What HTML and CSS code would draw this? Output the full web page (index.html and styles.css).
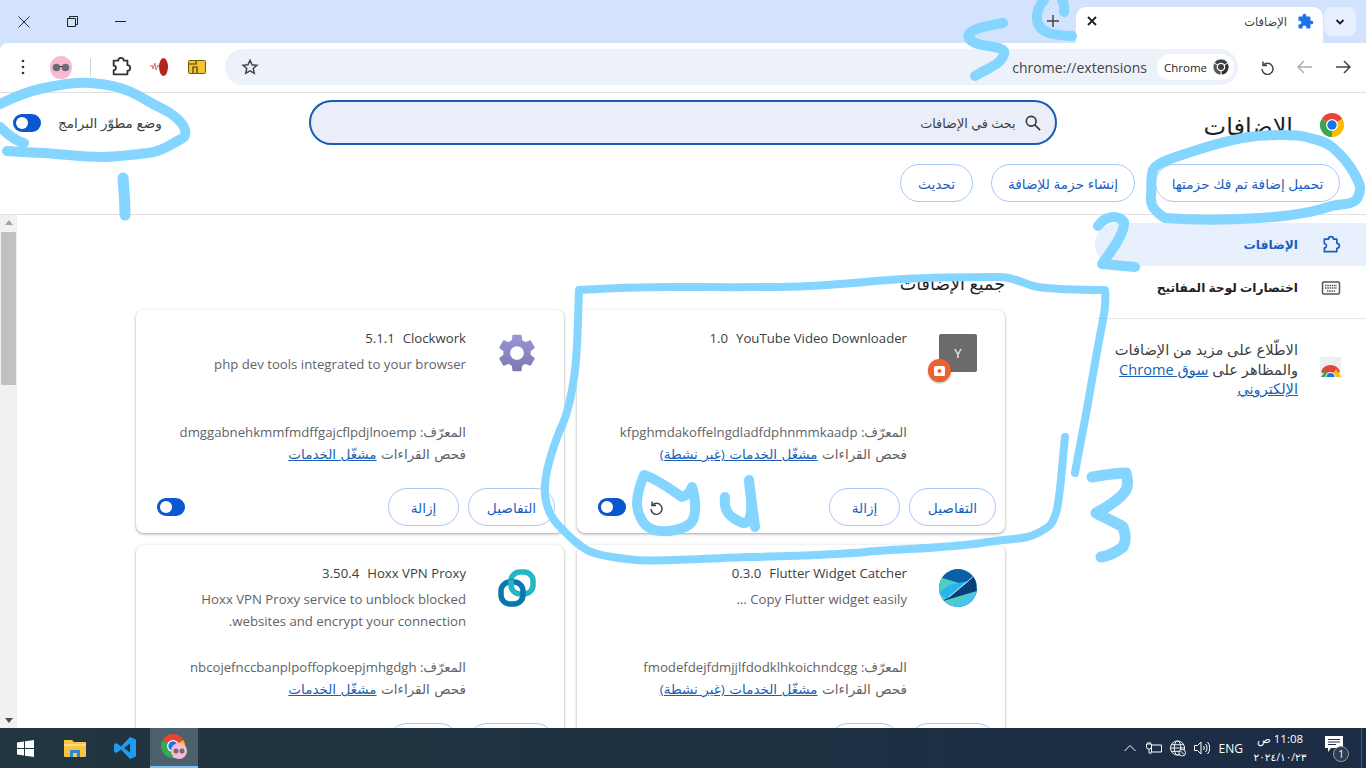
FILE: index.html
```html
<!DOCTYPE html>
<html lang="ar" dir="rtl">
<head>
    <meta charset="UTF-8">
    <meta name="viewport" content="width=device-width, initial-scale=1.0">
    <title>الإضافات</title>
    <link rel="stylesheet" href="styles.css">
</head>
<body>

    <svg class="defs" width="0" height="0">
        <symbol id="chrome-logo" viewBox="0 0 24 24">
            <path fill="#ea4335" d="M12 12L1.6 6A12 12 0 0 1 22.4 6Z"/>
            <path fill="#fbbc04" d="M12 12L22.4 6A12 12 0 0 1 12 24Z"/>
            <path fill="#34a853" d="M12 12L12 24A12 12 0 0 1 1.6 6Z"/>
            <circle cx="12" cy="12" r="6" fill="#fff"/>
            <circle cx="12" cy="12" r="4.7" fill="#1a73e8"/>
        </symbol>
        <symbol id="puzzle" viewBox="0 0 24 24">
            <path d="M4 5h5a3 3 0 0 1 6 0h4v5a3 3 0 0 1 0 6v4H4v-4.500a2 2 0 0 0 0-5z"/>
        </symbol>
    </svg>

    <!-- window title bar + tab -->
    <div class="titlebar">
        <button class="strip-btn">
            <svg width="12" height="12" viewBox="0 0 12 12"><path d="M2.500 4L6 7.500 9.500 4" fill="none" stroke="#1f1f1f" stroke-width="1.800"/></svg>
        </button>
        <div class="tab">
            <svg class="tab-icon" width="17" height="17" viewBox="0 0 24 24"><path fill="#1a73e8" d="M20.500 11H19V7c0-1.100-.9-2-2-2h-4V3.500C13 2.120 11.880 1 10.500 1S8 2.120 8 3.500V5H4c-1.100 0-2 .9-2 2v3.800h1.500c1.490 0 2.700 1.210 2.700 2.700s-1.210 2.700-2.700 2.700H2V20c0 1.100.9 2 2 2h3.800v-1.500c0-1.490 1.210-2.700 2.700-2.700 1.490 0 2.700 1.210 2.700 2.700V22H17c1.100 0 2-.9 2-2v-4h1.500c1.380 0 2.500-1.120 2.500-2.500S21.880 11 20.500 11z"/></svg>
            <span class="tab-title">الإضافات</span>
            <svg class="tab-close" width="10" height="10" viewBox="0 0 10 10"><path d="M1 1l8 8M9 1L1 9" stroke="#1f1f1f" stroke-width="1.800"/></svg>
        </div>
        <button class="new-tab">
            <svg width="12" height="12" viewBox="0 0 12 12"><path d="M6 0v12M0 6h12" stroke="#444" stroke-width="1.500"/></svg>
        </button>
        <div class="spacer"></div>
        <div class="win-btn"><svg width="11" height="11" viewBox="0 0 11 11"><path d="M0 5.500h11" stroke="#222"/></svg></div>
        <div class="win-btn"><svg width="11" height="11" viewBox="0 0 11 11"><path d="M.5 2.500h8v8h-8zM2.500 2.500v-2h8v8h-2" fill="none" stroke="#222"/></svg></div>
        <div class="win-btn"><svg width="12" height="12" viewBox="0 0 12 12"><path d="M.5.500l11 11M11.500.500l-11 11" stroke="#222"/></svg></div>
    </div>

    <!-- address bar -->
    <div class="toolbar">
        <div class="tool">
            <svg width="16" height="16" viewBox="0 0 16 16"><path d="M1 8h14M9 2l6 6-6 6" fill="none" stroke="#444" stroke-width="1.500"/></svg>
        </div>
        <div class="tool">
            <svg width="16" height="16" viewBox="0 0 16 16"><path d="M15 8H1M7 2L1 8l6 6" fill="none" stroke="#a9adb3" stroke-width="1.500"/></svg>
        </div>
        <div class="tool">
            <svg width="16" height="16" viewBox="0 0 16 16"><path d="M4 2.500v4h4M4.300 6.300A5.500 5.500 0 1 1 3 10" fill="none" stroke="#444" stroke-width="1.500"/></svg>
        </div>
        <div class="omnibox">
            <div class="chip">
                <svg width="16" height="16" viewBox="0 0 24 24"><g stroke="#fff" stroke-width="1.200"><path fill="#3c4043" d="M12 12L1.600 6A12 12 0 0 1 22.400 6Z"/><path fill="#2a2d30" d="M12 12L22.400 6A12 12 0 0 1 12 24Z"/><path fill="#50555a" d="M12 12L12 24A12 12 0 0 1 1.600 6Z"/></g><circle cx="12" cy="12" r="6.500" fill="#fff"/><circle cx="12" cy="12" r="4.500" fill="#3c4043"/></svg>
                <span>Chrome</span>
            </div>
            <span class="url">chrome://extensions</span>
            <svg class="star" width="18" height="18" viewBox="0 0 24 24"><path d="M12 3l2.700 6 6.500.7-4.900 4.300 1.400 6.400L12 17.100l-5.700 3.300 1.400-6.400L2.800 9.700 9.300 9z" fill="none" stroke="#444" stroke-width="2"/></svg>
        </div>
        <div class="tool">
            <svg width="18" height="14" viewBox="0 0 18 14"><rect x=".5" y=".5" width="17" height="13" rx="1" fill="#f4c430" stroke="#6b5a10"/><path d="M1 4h7V1M5 13V7h4v6" fill="none" stroke="#4a3d08" stroke-width="1.200"/></svg>
        </div>
        <div class="tool">
            <svg width="20" height="20" viewBox="0 0 20 20"><ellipse cx="14.500" cy="10" rx="4.500" ry="9" fill="#b3261e"/><path d="M1 10l2-2 1 4 2-6 1 7 2-5 1 2" fill="none" stroke="#d9736c" stroke-width="1"/></svg>
        </div>
        <div class="tool">
            <svg class="icon-line" width="22" height="22"><use href="#puzzle"/></svg>
        </div>
        <div class="tool-sep"></div>
        <div class="tool">
            <svg width="22" height="23" viewBox="0 0 22 23"><ellipse cx="11" cy="11.500" rx="11" ry="11.500" fill="#f7b9d3"/><circle cx="6.500" cy="11.500" r="3.800" fill="#6a6e70"/><circle cx="15.500" cy="11.500" r="3.800" fill="#6a6e70"/><path d="M10 10.500h2" stroke="#333"/></svg>
        </div>
        <div class="tool">
            <svg width="4" height="16" viewBox="0 0 4 16"><circle cx="2" cy="2" r="1.300" fill="#333"/><circle cx="2" cy="8" r="1.300" fill="#333"/><circle cx="2" cy="14" r="1.300" fill="#333"/></svg>
        </div>
    </div>

    <!-- extensions page header -->
    <div class="page-head">
        <div class="page-title">
            <svg width="24" height="24"><use href="#chrome-logo"/></svg>
            <h1>الإضافات</h1>
        </div>
        <div class="search">
            <svg width="16" height="16" viewBox="0 0 18 18"><circle cx="7" cy="7" r="5.500" fill="none" stroke="#333" stroke-width="1.800"/><path d="M11 11l6 6" stroke="#333" stroke-width="1.800"/></svg>
            <span>بحث في الإضافات</span>
        </div>
        <div class="dev-mode">
            <span>وضع مطوّر البرامج</span>
            <div class="toggle"></div>
        </div>
    </div>

    <div class="dev-actions">
        <button class="pill load">تحميل إضافة تم فك حزمتها</button>
        <button class="pill pack">إنشاء حزمة للإضافة</button>
        <button class="pill update">تحديث</button>
    </div>

    <div class="main">
        <div class="sidebar">
            <div class="side-item active">
                <svg class="icon-line blue" width="20" height="20"><use href="#puzzle"/></svg>
                <span>الإضافات</span>
            </div>
            <div class="side-item">
                <svg width="20" height="20" viewBox="0 0 20 20"><rect x="1.500" y="4" width="17" height="12" rx="1.500" fill="none" stroke="#555" stroke-width="1.500"/><path d="M4 7.500h12M4 10h12M6 13h8" stroke="#555" stroke-width="1.500" stroke-dasharray="1.500 .8"/></svg>
                <span>اختصارات لوحة المفاتيح</span>
            </div>
            <div class="side-divider"></div>
            <div class="promo">
                <svg width="21" height="20" viewBox="0 0 21 20"><rect width="21" height="20" fill="#eceff1"/><clipPath id="promo-clip"><rect width="21" height="20"/></clipPath><g clip-path="url(#promo-clip)"><path fill="#ea4335" d="M10.500 20L1 15A10 10 0 0 1 20 15Z"/><path fill="#fbbc04" d="M10.500 20L16 12l5 8Z"/><path fill="#34a853" d="M10.500 20L6 13l-5 7Z"/><circle cx="10.500" cy="20" r="5" fill="#fff"/><circle cx="10.500" cy="20" r="4" fill="#1a73e8"/></g></svg>
                <p>الاطّلاع على مزيد من الإضافات<br>والمظاهر على <a href="#">سوق Chrome<br>الإلكتروني</a></p>
            </div>
        </div>

        <div class="content">
            <h2>جميع الإضافات</h2>
            <div class="cards">

                <div class="card">
                    <div class="card-body">
                        <div class="ext-icon">
                            <div class="yt-icon">Y</div>
                            <div class="yt-badge"><svg width="12" height="10" viewBox="0 0 12 10"><rect width="11" height="10" rx="1.500" fill="#fff"/><circle cx="5.500" cy="5" r="2" fill="#f0602c"/></svg></div>
                        </div>
                        <div class="card-text">
                            <div class="ext-name"><span>YouTube Video Downloader</span><span>1.0</span></div>
                            <div class="ext-desc"></div>
                            <div class="ext-id">المعرّف: kfpghmdakoffelngdladfdphnmmkaadp</div>
                            <div class="ext-views">فحص القراءات <a href="#">مشغّل الخدمات (غير نشطة)</a></div>
                        </div>
                    </div>
                    <div class="card-foot">
                        <button class="pill details">التفاصيل</button>
                        <button class="pill remove">إزالة</button>
                        <div class="spacer"></div>
                        <svg class="card-reload" width="16" height="16" viewBox="0 0 16 16"><path d="M4 2.500v4h4M4.300 6.300A5.500 5.500 0 1 1 3 10" fill="none" stroke="#444" stroke-width="1.500"/></svg>
                        <div class="toggle"></div>
                    </div>
                </div>

                <div class="card">
                    <div class="card-body">
                        <div class="ext-icon">
                            <svg width="38" height="38" viewBox="2 2 20 20"><defs><linearGradient id="gear-fill" x1="0" y1="0" x2="0" y2="1"><stop offset="0" stop-color="#9a96d8"/><stop offset="1" stop-color="#7d79b0"/></linearGradient></defs><path fill="url(#gear-fill)" d="M19.140 12.940c.04-.3.06-.61.06-.94 0-.32-.02-.64-.07-.94l2.030-1.580c.18-.14.23-.41.12-.61l-1.920-3.320c-.12-.22-.37-.29-.59-.22l-2.390.96c-.5-.38-1.030-.7-1.620-.94l-.36-2.540c-.04-.24-.24-.41-.48-.41h-3.840c-.24 0-.43.17-.47.41l-.36 2.540c-.59.24-1.130.57-1.620.94l-2.390-.96c-.22-.08-.47 0-.59.22L2.740 8.870c-.12.21-.08.47.12.61l2.030 1.580c-.05.3-.09.63-.09.94s.02.64.07.94l-2.030 1.580c-.18.14-.23.41-.12.61l1.920 3.320c.12.22.37.29.59.22l2.390-.96c.5.38 1.030.7 1.620.94l.36 2.540c.05.24.24.41.48.41h3.840c.24 0 .44-.17.47-.41l.36-2.540c.59-.24 1.130-.56 1.620-.94l2.390.96c.22.08.47 0 .59-.22l1.920-3.320c.12-.22.07-.47-.12-.61l-2.010-1.580zM12 15.600c-1.980 0-3.600-1.620-3.600-3.600s1.620-3.600 3.600-3.600 3.600 1.620 3.600 3.600-1.620 3.600-3.600 3.600z"/></svg>
                        </div>
                        <div class="card-text">
                            <div class="ext-name"><span>Clockwork</span><span>5.1.1</span></div>
                            <div class="ext-desc">php dev tools integrated to your browser</div>
                            <div class="ext-id">المعرّف: dmggabnehkmmfmdffgajcflpdjlnoemp</div>
                            <div class="ext-views">فحص القراءات <a href="#">مشغّل الخدمات</a></div>
                        </div>
                    </div>
                    <div class="card-foot">
                        <button class="pill details">التفاصيل</button>
                        <button class="pill remove">إزالة</button>
                        <div class="spacer"></div>
                        <div class="toggle"></div>
                    </div>
                </div>

                <div class="card">
                    <div class="card-body">
                        <div class="ext-icon">
                            <svg width="38" height="38" viewBox="0 0 38 38"><defs><clipPath id="flutter-clip"><circle cx="19" cy="19" r="19"/></clipPath></defs><g clip-path="url(#flutter-clip)"><rect width="38" height="38" fill="#0b5ea8"/><path d="M0 8l20 6 18-2v14L10 38H0z" fill="#4ecdc4"/><path d="M36 6L4 32l34-10z" fill="#0a3f7a"/><path d="M30 12L8 30l-8-6 10-8z" fill="#2bb3ee"/><path d="M10 38l28-16v16z" fill="#49c5ec"/><path d="M36 6L10 28" stroke="#fff" stroke-width=".8"/></g></svg>
                        </div>
                        <div class="card-text">
                            <div class="ext-name"><span>Flutter Widget Catcher</span><span>0.3.0</span></div>
                            <div class="ext-desc">Copy Flutter widget easily ...</div>
                            <div class="ext-id">المعرّف: fmodefdejfdmjjlfdodklhkoichndcgg</div>
                            <div class="ext-views">فحص القراءات <a href="#">مشغّل الخدمات (غير نشطة)</a></div>
                        </div>
                    </div>
                    <div class="card-foot">
                        <button class="pill details"></button>
                        <button class="pill remove"></button>
                    </div>
                </div>

                <div class="card">
                    <div class="card-body">
                        <div class="ext-icon">
                            <svg width="38" height="38" viewBox="0 0 38 38" fill="none" stroke-width="5.500"><rect x="13" y="3" width="22" height="22" rx="9" stroke="#25b5c4"/><rect x="3" y="13" width="22" height="22" rx="9" stroke="#0a78b0"/><path d="M13 11v6" stroke="#25b5c4"/></svg>
                        </div>
                        <div class="card-text">
                            <div class="ext-name"><span>Hoxx VPN Proxy</span><span>3.50.4</span></div>
                            <div class="ext-desc">Hoxx VPN Proxy service to unblock blocked websites and encrypt your connection.</div>
                            <div class="ext-id">المعرّف: nbcojefnccbanplpoffopkoepjmhgdgh</div>
                            <div class="ext-views">فحص القراءات <a href="#">مشغّل الخدمات</a></div>
                        </div>
                    </div>
                    <div class="card-foot">
                        <button class="pill details"></button>
                        <button class="pill remove"></button>
                    </div>
                </div>

            </div>
        </div>

        <div class="scrollbar">
            <div class="arrow up"></div>
            <div class="thumb"></div>
            <div class="spacer"></div>
            <div class="arrow down"></div>
        </div>
    </div>

    <!-- windows taskbar -->
    <div class="taskbar">
        <div class="task-apps">
            <div class="task-app">
                <svg width="17" height="17" viewBox="0 0 17 17" fill="#fff"><path d="M0 2.400l7-1v6.600H0zM8 1.300L17 0v8H8zM0 9h7v6.600l-7-1zM8 9h9v8l-9-1.300z"/></svg>
            </div>
            <div class="task-app">
                <svg width="22" height="20" viewBox="0 0 22 20"><path d="M0 2h8l2 2h12v14a1 1 0 0 1-1 1H1a1 1 0 0 1-1-1z" fill="#f6c545"/><path d="M0 6h22v2H0z" fill="#f9dc7c"/><path d="M6 19v-7h10v7h-3v-4H9v4z" fill="#2b87d3"/></svg>
            </div>
            <div class="task-app">
                <svg width="24" height="24" viewBox="0 0 24 24"><path fill="#1f9cf0" fill-rule="evenodd" d="M17 1L8 10.500 3.500 7 1 8.500v7L3.500 17 8 13.500 17 23l6-2.500v-17zM17 7.500v9L11 12z"/></svg>
            </div>
            <div class="task-app current">
                <svg width="26" height="26" viewBox="0 0 26 26"><use href="#chrome-logo" width="24" height="24"/><circle cx="18" cy="17" r="8" fill="#f7b9d3"/><circle cx="15" cy="17" r="2.500" fill="#6a6e70"/><circle cx="21" cy="17" r="2.500" fill="#6a6e70"/></svg>
            </div>
        </div>
        <div class="tray">
            <svg class="tray-icon" width="12" height="8" viewBox="0 0 12 8"><path d="M.5 7l5.500-5.500L11.500 7" fill="none" stroke="#fff"/></svg>
            <svg class="tray-icon" width="16" height="12" viewBox="0 0 16 12"><path d="M5.500 3h10v7h-10zM2 0v2M4 0v2M.5 2h5v3a2 2 0 0 1-2 2h-1a2 2 0 0 1-2-2zM3 7v4h3" fill="none" stroke="#fff"/></svg>
            <svg class="tray-icon" width="16" height="17" viewBox="0 0 17 17"><g fill="none" stroke="#fff"><circle cx="8" cy="8" r="7.500"/><ellipse cx="8" cy="8" rx="3.500" ry="7.500"/><path d="M.5 8h15M1.500 4.500h13M1.500 11.500h13"/></g><circle cx="13" cy="13" r="3.500" fill="#1d2e45" stroke="#fff"/><path d="M11 11l4 4" stroke="#fff"/></svg>
            <svg class="tray-icon" width="16" height="14" viewBox="0 0 16 14"><path d="M.5 4.500h3L7 1v12L3.500 9.500h-3zM9.500 5a3 3 0 0 1 0 4M11.500 3a6 6 0 0 1 0 8M13.500 1a9 9 0 0 1 0 12" fill="none" stroke="#fff"/></svg>
            <span class="lang">ENG</span>
            <div class="clock">
                <span dir="rtl">11:08 ص</span>
                <span class="date" dir="ltr">٢٠٢٤/١٠/٢٣</span>
            </div>
            <div class="notify">
                <svg width="18" height="17" viewBox="0 0 18 17"><path d="M0 0h18v12H6l-3 4v-4H0z" fill="#fff"/><path d="M3 3.500h12M3 6h12M3 8.500h8" stroke="#1d2e45"/></svg>
                <span class="notify-badge">1</span>
            </div>
            <div class="show-desktop"></div>
        </div>
    </div>

    <!-- hand drawn notes over the screenshot -->
    <svg class="marker" width="1366" height="768" viewBox="0 0 1366 768">
        <path d="M0 104C14 97 30 91 44 88S78 82 91 83 118 86 131 92 150 103 161 108 183 122 185 130 182 138 174 143 158 152 148 153 118 157 100 157 62 154 44 153 20 152 7 151"/>
        <path d="M0 127C6 132 12 140 24 143"/>
        <path class="thick" d="M123 178C124 190 125 202 125 215"/>
        <path d="M1003 23C990 25 975 28 970 33S972 42 978 44 1000 47 1003 50 1003 57 1000 61 985 70 975 76"/>
        <path d="M1044 0C1036 10 1035 20 1040 27S1055 35 1072 36M1062 0C1064 4 1065 8 1064 12"/>
        <path d="M1165 218C1155 212 1150 205 1151 197S1150 178 1153 170 1178 156 1197 150 1235 139 1249 137 1295 134 1306 137 1325 141 1332 147 1348 162 1354 173 1362 188 1358 197 1340 203 1328 207 1290 216 1260 218 1190 220 1165 218"/>
        <path d="M1098 226C1105 216 1118 214 1124 222 1125 235 1108 255 1102 264L1135 267"/>
        <path class="thin" d="M560 430C566 418 572 395 575 370S578 310 579 290C610 288 645 287 675 287S770 288 809 286 870 281 904 279 985 277 1000 277 1025 285 1038 287 1080 290 1105 290C1106 300 1105 310 1103 320 1098 345 1092 380 1088 403S1078 455 1075 473"/>
        <path class="thin" d="M560 430C552 450 546 470 545 485S548 515 560 527 578 545 587 550 615 558 636 560 710 558 751 557 835 555 866 552 950 548 981 543 1025 540 1038 533 1052 525 1056 513 1062 465 1065 437"/>
        <path class="thick" d="M1092 477C1105 475 1115 473 1126 473 1128 480 1128 486 1126 490 1120 500 1105 508 1096 513 1105 518 1115 522 1123 527 1126 535 1126 542 1123 547 1115 553 1108 556 1101 557"/>
        <path d="M644 475C640 485 637 495 637 503S641 522 648 527 665 532 675 530 692 525 694 517 695 497 692 487C690 492 686 496 682 497 672 490 655 478 644 475"/>
        <path d="M725 497C724 505 726 510 728 513S738 522 744 523 752 512 751 500 749 486 749 480C751 495 753 512 755 527"/>
    </svg>

</body>
</html>
```

FILE: styles.css
```css
* {
    box-sizing: border-box;
}
html, body {
    margin: 0;
    height: 768px;
    overflow: hidden;
}
body {
    position: relative;
    display: flex;
    flex-direction: column;
    font-family: "Open Sans", "DejaVu Sans", sans-serif;
    font-size: 13px;
    color: #3c4043;
    background: #fff;
}
a {
    color: #1a5fb4;
}
button {
    font-family: inherit;
    cursor: pointer;
}
.defs {
    position: absolute;
}
.spacer {
    flex: 1;
}

/* title bar */
.titlebar {
    height: 51px;
    margin-bottom: -8px;
    display: flex;
    align-items: flex-start;
    padding-right: 10px;
    background: #d3e3fd;
    flex-shrink: 0;
}
.strip-btn {
    width: 32px;
    height: 29px;
    margin: 7px 0 0 1px;
    display: flex;
    align-items: center;
    justify-content: center;
    border: 0;
    border-radius: 8px;
    background: #e6effd;
}
.tab {
    width: 247px;
    height: 36px;
    margin-top: 7px;
    display: flex;
    align-items: center;
    padding: 0 9px 8px 11px;
    border-radius: 10px 10px 0 0;
    background: #fff;
}
.tab-title {
    margin-right: 10px;
    font-size: 11.5px;
    flex: 1;
}
.new-tab {
    width: 28px;
    height: 28px;
    margin: 7px 9px 0 0;
    display: flex;
    align-items: center;
    justify-content: center;
    border: 0;
    background: none;
}
.win-btn {
    width: 48px;
    height: 43px;
    display: flex;
    align-items: center;
    justify-content: center;
}

/* toolbar */
.toolbar {
    position: relative;
    height: 50px;
    display: flex;
    align-items: center;
    padding: 0 4px 1px 4px;
    border-bottom: 1px solid #e0e0e0;
    border-top-left-radius: 8px;
    background: #fff;
    flex-shrink: 0;
}
.tool {
    width: 38px;
    height: 36px;
    display: flex;
    align-items: center;
    justify-content: center;
    flex-shrink: 0;
}
.tool-sep {
    width: 1px;
    height: 18px;
    margin: 0 11px 0 10px;
    background: #c4d5ee;
}
.icon-line {
    fill: none;
    stroke: #333;
    stroke-width: 2;
    stroke-linejoin: round;
}
.icon-line.blue {
    stroke: #1a5fc0;
}
.omnibox {
    flex: 1;
    height: 36px;
    margin: 0 10px 0 9px;
    padding: 0 4px 0 16px;
    display: flex;
    align-items: center;
    border-radius: 18px;
    background: #edf2fa;
}
.chip {
    width: 77px;
    height: 26px;
    display: flex;
    align-items: center;
    gap: 6px;
    padding-right: 5px;
    border-radius: 13px;
    background: #fff;
    font-size: 11.5px;
    color: #1f1f1f;
    flex-shrink: 0;
}
.url {
    margin-right: 10px;
    font-size: 14px;
    color: #444;
    direction: ltr;
}
.star {
    margin-right: auto;
}

/* extensions header */
.page-head {
    height: 62px;
    padding: 0 22px 3px 13px;
    display: flex;
    align-items: center;
    justify-content: space-between;
    flex-shrink: 0;
}
.page-title {
    display: flex;
    align-items: center;
    gap: 27px;
    margin-top: 5px;
}
h1 {
    margin: 0;
    font-size: 24px;
    font-weight: 400;
    color: #1f1f1f;
}
.search {
    width: 748px;
    height: 45px;
    display: flex;
    align-items: center;
    gap: 9px;
    padding: 0 14px;
    border: 2px solid #1a5bb5;
    border-radius: 23px;
    background: #ebeef8;
    font-size: 12.8px;
}
.dev-mode {
    display: flex;
    align-items: center;
    gap: 17px;
    font-size: 13.6px;
}
.toggle {
    width: 28px;
    height: 18px;
    padding: 3px;
    display: flex;
    justify-content: flex-end;
    border-radius: 9px;
    background: #0b57d0;
    flex-shrink: 0;
}
.toggle::after {
    content: "";
    width: 12px;
    height: 12px;
    border-radius: 50%;
    background: #fff;
}
.dev-actions {
    height: 60px;
    padding: 9px 26px 0 0;
    display: flex;
    gap: 18px;
    border-bottom: 1px solid #e0e0e0;
    flex-shrink: 0;
}
.pill {
    height: 38px;
    padding: 0;
    border: 1px solid #a8c7fa;
    border-radius: 19px;
    background: #fff;
    font-size: 13.7px;
    font-weight: 500;
    color: #1a5fc0;
    flex-shrink: 0;
}
.pill.load { width: 185px; margin-left: 2px; }
.pill.pack { width: 144px; }
.pill.update { width: 73px; }
.pill.details { width: 87px; }
.pill.remove { width: 71px; }

/* main area */
.main {
    flex: 1;
    min-height: 0;
    display: flex;
    overflow: hidden;
}
.sidebar {
    width: 271px;
    padding-top: 8px;
    flex-shrink: 0;
}
.side-item {
    height: 43px;
    display: flex;
    align-items: center;
    gap: 23px;
    padding-right: 25px;
    font-weight: 600;
    color: #1f1f1f;
    font-size: 12.2px;
}
.side-item.active {
    border-radius: 22px 0 0 22px;
    background: #e8f0fe;
    color: #1a5fc0;
}
.side-divider {
    height: 1px;
    margin-top: 9px;
    background: #e6e6e6;
}
.promo {
    display: flex;
    align-items: center;
    gap: 22px;
    padding: 21px 25px 0 0;
}
.promo svg {
    margin-top: -4px;
}
.promo p {
    margin: 0;
    line-height: 19.5px;
    font-size: 14.6px;
    white-space: nowrap;
}
.content {
    flex: 1;
    padding: 56px 90px 0 0;
    min-width: 0;
}
h2 {
    margin: 0 0 15px;
    height: 24px;
    line-height: 24px;
    font-size: 17.5px;
    font-weight: 400;
    color: #1f1f1f;
}
.cards {
    display: grid;
    grid-template-columns: 428px 428px;
    gap: 12px 13px;
}
.card {
    height: 223px;
    display: flex;
    flex-direction: column;
    border-radius: 8px;
    background: #fff;
    box-shadow: 0 1px 3px 1px rgba(60, 64, 67, 0.15), 0 1px 2px rgba(60, 64, 67, 0.3);
}
.card-body {
    height: 178px;
    display: flex;
    gap: 32px;
    padding: 24px 28px 0 0;
    flex-shrink: 0;
}
.ext-icon {
    position: relative;
    width: 38px;
    height: 38px;
    flex-shrink: 0;
}
.yt-icon {
    height: 38px;
    line-height: 38px;
    text-align: center;
    border-radius: 2px;
    background: #6b6b6b;
    color: #fff;
    font-size: 13px;
}
.yt-badge {
    position: absolute;
    top: 25px;
    right: 26px;
    width: 23px;
    height: 23px;
    display: flex;
    align-items: center;
    justify-content: center;
    border-radius: 50%;
    background: #f0602c;
    box-shadow: 0 1px 2px rgba(0, 0, 0, 0.3);
}
.card-text {
    flex: 1;
    min-width: 0;
    margin-top: -7px;
    padding-left: 40px;
    line-height: 22px;
    font-size: 13.2px;
}
.ext-name {
    display: flex;
    gap: 8px;
    color: #3c4043;
    margin-bottom: 4px;
}
.ext-desc {
    height: 68px;
    color: #5f6368;
}
.ext-id, .ext-views {
    color: #5f6368;
}
.ext-views {
    word-spacing: 1px;
    font-size: 13.5px;
}
.card-foot {
    display: flex;
    align-items: center;
    gap: 9px;
    padding: 0 9px 0 21px;
}
.card-reload {
    margin-left: 13px;
}

/* scrollbar */
.scrollbar {
    width: 17px;
    display: flex;
    flex-direction: column;
    align-items: center;
    background: #f1f1f1;
    flex-shrink: 0;
}
.arrow {
    width: 0;
    height: 0;
    margin: 5px 0;
    border-left: 4px solid transparent;
    border-right: 4px solid transparent;
}
.arrow.up { border-bottom: 5px solid #a3a3a3; }
.arrow.down { border-top: 5px solid #505050; }
.thumb {
    width: 15px;
    height: 153px;
    margin-top: 2px;
    background: #c1c1c1;
}

/* taskbar */
.taskbar {
    height: 40px;
    display: flex;
    direction: ltr;
    justify-content: space-between;
    background: linear-gradient(90deg, #21363f, #1b2c45);
    color: #fff;
    flex-shrink: 0;
}
.task-apps {
    display: flex;
}
.task-app {
    width: 50px;
    height: 40px;
    display: flex;
    align-items: center;
    justify-content: center;
}
.task-app.current {
    width: 48px;
    background: #4d616c;
    border-bottom: 2px solid #7cc0f0;
}
.tray {
    display: flex;
    align-items: center;
}
.tray-icon {
    margin-right: 8px;
}
.tray-icon:first-child {
    margin-right: 10px;
}
.lang {
    margin: 0 6px 0 1px;
    font-size: 12px;
}
.clock {
    width: 62px;
    display: flex;
    flex-direction: column;
    align-items: center;
    font-size: 11.5px;
    line-height: 19px;
}
.clock .date {
    font-size: 10.5px;
}
.notify {
    position: relative;
    width: 24px;
    height: 24px;
    margin: 0 12px 0 14px;
}
.notify-badge {
    position: absolute;
    top: 10px;
    left: 8px;
    width: 16px;
    height: 16px;
    line-height: 15px;
    text-align: center;
    border: 1px solid #999;
    border-radius: 50%;
    background: #2d3c4e;
    font-size: 10px;
}
.show-desktop {
    width: 5px;
    height: 40px;
    border-left: 1px solid #4a5a6e;
}

/* drawn notes */
.marker {
    position: absolute;
    top: 0;
    left: 0;
    pointer-events: none;
    fill: none;
    stroke: #84d5ff;
    stroke-width: 10;
    stroke-linecap: round;
    stroke-linejoin: round;
}
.marker .thick {
    stroke-width: 11;
}
.marker .thin {
    stroke-width: 8;
}
```
